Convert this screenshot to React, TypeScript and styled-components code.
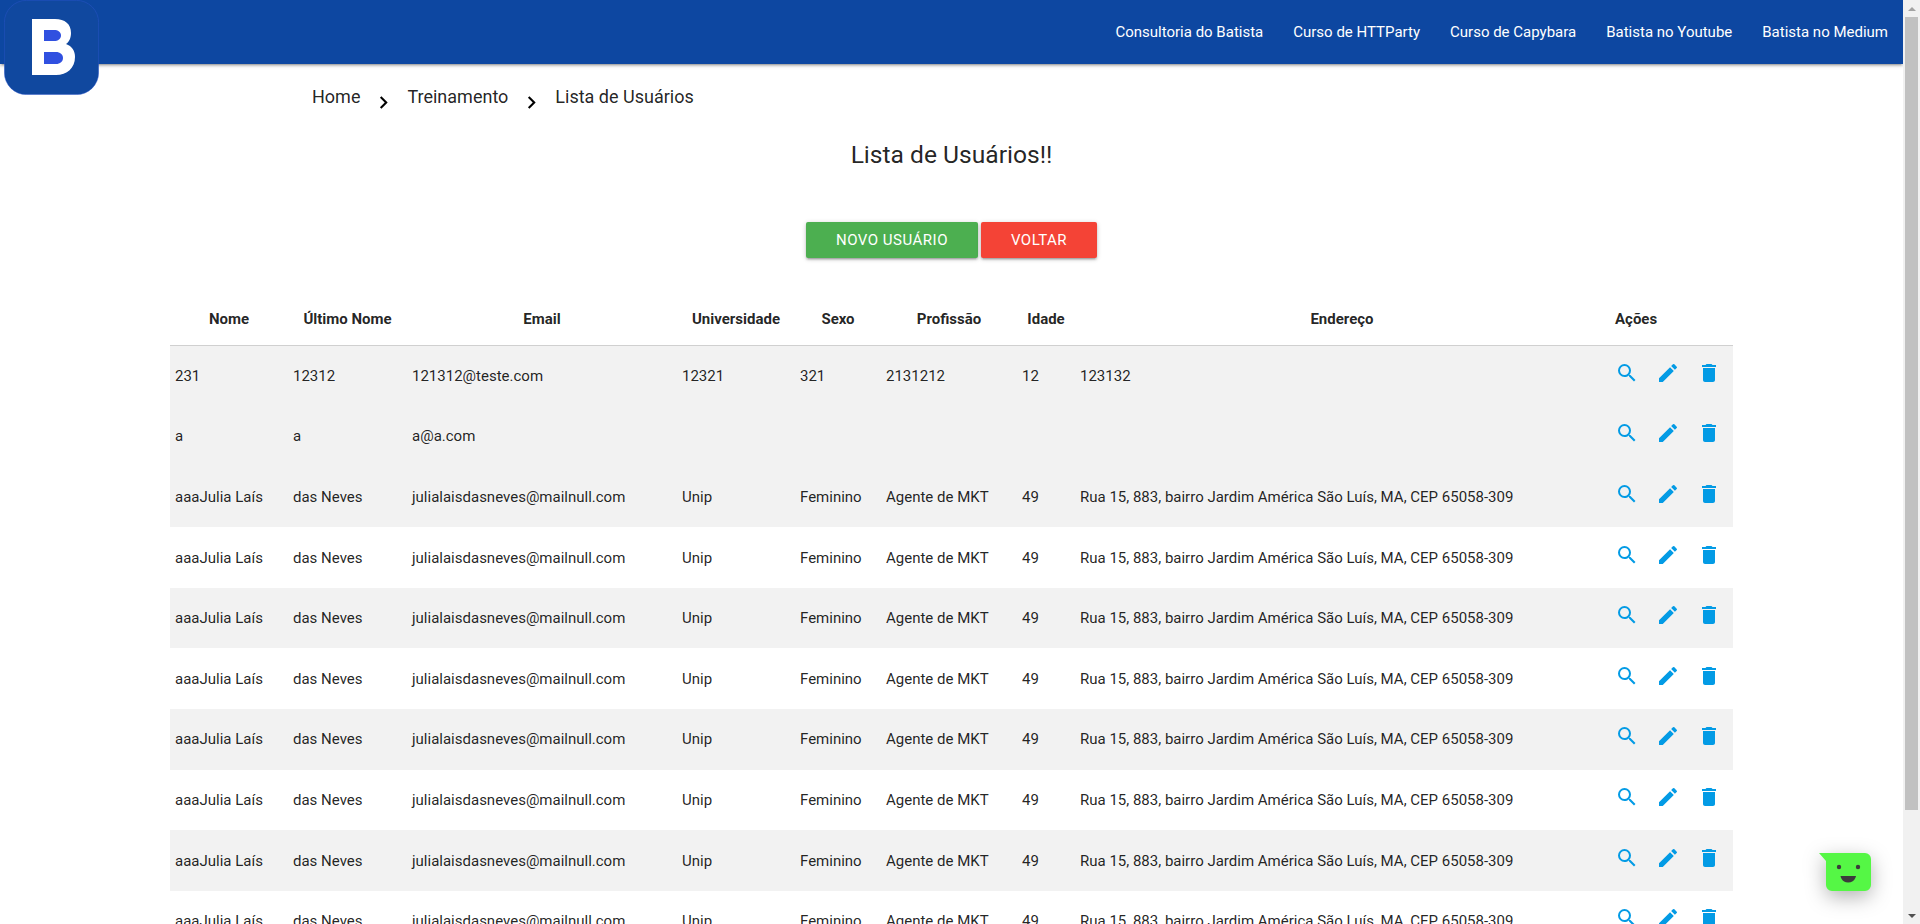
import styled, { createGlobalStyle } from "styled-components";
import { MdChevronRight, MdDelete, MdEdit, MdSearch } from "react-icons/md";

type User = {
  nome: string;
  sobrenome: string;
  email: string;
  universidade: string;
  sexo: string;
  profissao: string;
  idade: string;
  endereco: string;
  shaded: boolean;
};

const julia = {
  nome: "aaaJulia Laís",
  sobrenome: "das Neves",
  email: "julialaisdasneves@mailnull.com",
  universidade: "Unip",
  sexo: "Feminino",
  profissao: "Agente de MKT",
  idade: "49",
  endereco: "Rua 15, 883, bairro Jardim América São Luís, MA, CEP 65058-309",
};

const users: User[] = [
  {
    nome: "231",
    sobrenome: "12312",
    email: "121312@teste.com",
    universidade: "12321",
    sexo: "321",
    profissao: "2131212",
    idade: "12",
    endereco: "123132",
    shaded: true,
  },
  {
    nome: "a",
    sobrenome: "a",
    email: "a@a.com",
    universidade: "",
    sexo: "",
    profissao: "",
    idade: "",
    endereco: "",
    shaded: true,
  },
  ...[true, false, true, false, true, false, true, false].map((shaded) => ({ ...julia, shaded })),
];

const navLinks = [
  "Consultoria do Batista",
  "Curso de HTTParty",
  "Curso de Capybara",
  "Batista no Youtube",
  "Batista no Medium",
];

const columns = [
  { title: "Nome", width: 118 },
  { title: "Último Nome", width: 119 },
  { title: "Email", width: 270 },
  { title: "Universidade", width: 118 },
  { title: "Sexo", width: 86 },
  { title: "Profissão", width: 136 },
  { title: "Idade", width: 58 },
  { title: "Endereço", width: 534 },
];

const GlobalStyle = createGlobalStyle`
  html, body { margin: 0; height: 100%; overflow: hidden; background: #fff; }
  body { font-family: Roboto, "Liberation Sans", sans-serif; color: rgba(0, 0, 0, .87); }
`;

const Shell = styled.div` display: flex; height: 924px; overflow: hidden; `;
const Page = styled.div` flex: 1; min-width: 0; position: relative; overflow: hidden; `;

const Nav = styled.nav`
  height: 64px; background: #0d47a1; display: flex; justify-content: flex-end; align-items: center;
  padding-right: 15px; gap: 30px;
  box-shadow: 0 2px 2px 0 rgba(0,0,0,.14), 0 3px 1px -2px rgba(0,0,0,.12), 0 1px 5px 0 rgba(0,0,0,.2);
`;
const NavLink = styled.a` color: #fff; font-size: 15px; line-height: 22px; `;

const Logo = styled.svg` position: absolute; left: 4px; top: 0; width: 95px; height: 95px; `;

const Breadcrumbs = styled.div`
  display: flex; align-items: center; padding: 19px 0 0 312px; height: 27px; font-size: 18px; line-height: 27px;
`;
const Crumb = styled.span` color: rgba(0, 0, 0, .87); `;
const CrumbArrow = styled(MdChevronRight)` width: 25px; height: 25px; margin: 11px 11px 0 11px; color: #000; flex: none; `;

const Title = styled.h1`
  margin: 27px 0 0; text-align: center; font-size: 24.6px; font-weight: 400; line-height: 36px;
`;

const Actions = styled.div` display: flex; justify-content: center; gap: 3px; margin-top: 49px; `;
const ActionButton = styled.a<{ $color: string; $width: number }>`
  width: ${(p) => p.$width}px; height: 36px; border-radius: 2px; background: ${(p) => p.$color}; color: #fff;
  display: flex; align-items: center; justify-content: center;
  font-size: 15px; font-weight: 400; letter-spacing: .5px; text-transform: uppercase;
  box-shadow: 0 2px 2px 0 rgba(0,0,0,.14), 0 3px 1px -2px rgba(0,0,0,.12), 0 1px 5px 0 rgba(0,0,0,.2);
`;

const TableWrap = styled.div` padding: 0 170px; margin-top: 34px; `;
const Table = styled.table` width: 1563px; table-layout: fixed; border-collapse: collapse; font-size: 15px; `;
const HeadRow = styled.tr` border-bottom: 1px solid #d0d0d0; `;
const Th = styled.th`
  height: 53px; padding: 0 5px; font-size: 15px; font-weight: 700; line-height: 22px; text-align: center;
  white-space: nowrap;
`;
const ActionsTh = styled(Th)` text-align: left; padding-left: 6px; `;
const Row = styled.tr<{ $shaded: boolean }>`
  background: ${(p) => (p.$shaded ? "#f2f2f2" : "#fff")};
`;
const Td = styled.td` height: 60.6px; padding: 0 5px; line-height: 22px; white-space: nowrap; box-sizing: border-box; `;
const IconRow = styled.div` display: flex; gap: 17px; padding-left: 1px; color: #039be5; margin-top: -6px; `;
const IconLink = styled.a` display: flex; width: 24px; height: 24px; font-size: 24px; `;

const ChatBubble = styled.svg`
  position: absolute; right: 32px; top: 853px; width: 52px; height: 38px; overflow: visible;
  filter: drop-shadow(0 6px 10px rgba(0, 0, 0, .3));
`;

const Scrollbar = styled.div`
  width: 17px; flex: none; background: #f1f1f1; display: flex; flex-direction: column; align-items: center;
`;
const ScrollArrow = styled.div<{ $down?: boolean }>`
  width: 17px; height: 17px; flex: none; display: flex; align-items: center; justify-content: center;
  &::before {
    content: ""; border-left: 4px solid transparent; border-right: 4px solid transparent;
    ${(p) => (p.$down ? "border-top: 4px solid #505050;" : "border-bottom: 4px solid #a3a3a3;")}
  }
`;
const ScrollThumb = styled.div` width: 13px; height: 793px; background: #c1c1c1; `;
const ScrollSpace = styled.div` flex: 1; `;

export default function App() {
  return (
    <Shell>
      <GlobalStyle />
      <Page>
        <Nav>
          {navLinks.map((l) => (
            <NavLink key={l}>{l}</NavLink>
          ))}
        </Nav>

        <Logo viewBox="0 0 95 95">
          <rect x="0.4" y="0.4" width="94.2" height="94.2" rx="22" fill="#10489f" stroke="#2a55c8" strokeWidth="0.5" />
          <path
            d="M28 19h23c10 0 16 5 16 14 0 5-2 9-5 11 6 2 9 7 9 13 0 11-8 18-19 18H28z"
            fill="#fff"
          />
          <path d="M40 30h10c4 0 7 2 7 5.500s-3 5.500-7 5.500H40z" fill="#3050e0" />
          <path d="M40 52h12c4 0 7 2.500 7 6s-3 6-7 6H40z" fill="#3050e0" />
        </Logo>

        <Breadcrumbs>
          <Crumb>Home</Crumb>
          <CrumbArrow />
          <Crumb>Treinamento</Crumb>
          <CrumbArrow />
          <Crumb>Lista de Usuários</Crumb>
        </Breadcrumbs>

        <Title>Lista de Usuários!!</Title>

        <Actions>
          <ActionButton $color="#4caf50" $width={172}>Novo Usuário</ActionButton>
          <ActionButton $color="#f44336" $width={116}>Voltar</ActionButton>
        </Actions>

        <TableWrap>
          <Table>
            <colgroup>
              {columns.map((c) => (
                <col key={c.title} style={{ width: c.width }} />
              ))}
              <col />
            </colgroup>
            <thead>
              <HeadRow>
                {columns.map((c) => (
                  <Th key={c.title}>{c.title}</Th>
                ))}
                <ActionsTh>Ações</ActionsTh>
              </HeadRow>
            </thead>
            <tbody>
              {users.map((u, i) => (
                <Row key={i} $shaded={u.shaded}>
                  <Td>{u.nome}</Td>
                  <Td>{u.sobrenome}</Td>
                  <Td>{u.email}</Td>
                  <Td>{u.universidade}</Td>
                  <Td>{u.sexo}</Td>
                  <Td>{u.profissao}</Td>
                  <Td>{u.idade}</Td>
                  <Td>{u.endereco}</Td>
                  <Td>
                    <IconRow>
                      <IconLink><MdSearch /></IconLink>
                      <IconLink><MdEdit /></IconLink>
                      <IconLink><MdDelete /></IconLink>
                    </IconRow>
                  </Td>
                </Row>
              ))}
            </tbody>
          </Table>
        </TableWrap>

        <ChatBubble viewBox="0 0 52 38">
          <path d="M0 0h46a6 6 0 0 1 6 6v26a6 6 0 0 1-6 6H13a6 6 0 0 1-6-6V8z" fill="#55f745" />
          <circle cx="20" cy="14" r="2.200" fill="#3c3c3c" />
          <circle cx="39" cy="14" r="2.200" fill="#3c3c3c" />
          <path d="M21.500 23h15.500c0 0-1 6.500-7.800 6.500S21.500 23 21.500 23z" fill="#3c3c3c" />
        </ChatBubble>
      </Page>
      <Scrollbar>
        <ScrollArrow />
        <ScrollThumb />
        <ScrollSpace />
        <ScrollArrow $down />
      </Scrollbar>
    </Shell>
  );
}
